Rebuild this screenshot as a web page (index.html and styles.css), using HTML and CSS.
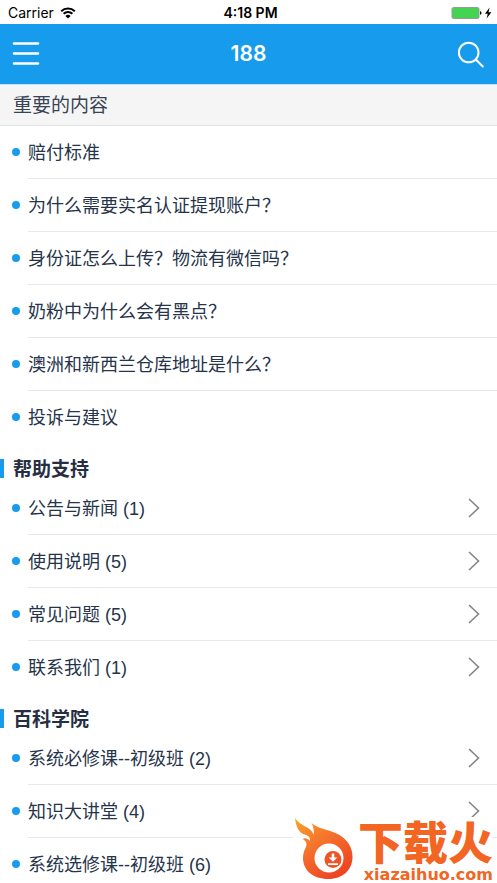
FILE: index.html
```
<!DOCTYPE html>
<html lang="zh-CN">
<head>
<meta charset="utf-8">
<meta name="viewport" content="width=device-width, initial-scale=1">
<title>188</title>
<link rel="stylesheet" href="styles.css">
</head>
<body>
<div class="screen">
  <div class="status">
    <div class="carrier">
      <span>Carrier</span>
      <svg class="wifi" viewBox="0 0 16 12" aria-hidden="true">
        <path d="M1.2 4.3a9.8 9.8 0 0 1 13.6 0M3.6 6.8a6.3 6.3 0 0 1 8.8 0" fill="none" stroke="#000" stroke-width="1.9"/>
        <path d="M8 11.6 5.4 8.9a3.8 3.8 0 0 1 5.2 0z"/>
      </svg>
    </div>
    <span class="time">4:18 PM</span>
    <svg class="battery" viewBox="0 0 42 14" aria-hidden="true">
      <rect x="1" y="1.5" width="27" height="11" rx="1.5" fill="#43d551" stroke="#999" />
      <path d="M29 5.2q1.6.3 1.6 1.8T29 8.8z"/>
      <path d="M38.6 1.5 34 7.8h2.8l-1.2 4.8 4.8-6.4h-2.9z"/>
    </svg>
  </div>
  <header class="navbar">
    <button class="icon-button" type="button" aria-label="菜单">
      <svg viewBox="0 0 28 28" aria-hidden="true"><path d="M2 3.5h24M2 13.5h24M2 23.5h24" stroke="#fff" stroke-width="2.6" stroke-linecap="round"/></svg>
    </button>
    <h1>188</h1>
    <button class="icon-button" type="button" aria-label="搜索">
      <svg viewBox="0 0 28 28" aria-hidden="true"><path d="M21.5 12.5a9.8 9.8 0 1 1-19.6 0 9.8 9.8 0 0 1 19.6 0zM18.8 19.5l7 7" fill="none" stroke="#fff" stroke-width="2" stroke-linecap="round"/></svg>
    </button>
  </header>
  <main>
    <h2 class="banner">重要的内容</h2>
    <ul class="list">
      <li><a href="#">赔付标准</a></li>
      <li><a href="#">为什么需要实名认证提现账户？</a></li>
      <li><a href="#">身份证怎么上传？物流有微信吗？</a></li>
      <li><a href="#">奶粉中为什么会有黑点？</a></li>
      <li><a href="#">澳洲和新西兰仓库地址是什么？</a></li>
      <li><a href="#">投诉与建议</a></li>
    </ul>
    <h2 class="section">帮助支持</h2>
    <ul class="list">
      <li><a href="#">公告与新闻 (1)<svg class="chevron" viewBox="0 0 12 20" aria-hidden="true"><path d="m1 1 9.5 9L1 19"/></svg></a></li>
      <li><a href="#">使用说明 (5)<svg class="chevron" viewBox="0 0 12 20" aria-hidden="true"><path d="m1 1 9.5 9L1 19"/></svg></a></li>
      <li><a href="#">常见问题 (5)<svg class="chevron" viewBox="0 0 12 20" aria-hidden="true"><path d="m1 1 9.5 9L1 19"/></svg></a></li>
      <li><a href="#">联系我们 (1)<svg class="chevron" viewBox="0 0 12 20" aria-hidden="true"><path d="m1 1 9.5 9L1 19"/></svg></a></li>
    </ul>
    <h2 class="section">百科学院</h2>
    <ul class="list">
      <li><a href="#">系统必修课--初级班 (2)<svg class="chevron" viewBox="0 0 12 20" aria-hidden="true"><path d="m1 1 9.5 9L1 19"/></svg></a></li>
      <li><a href="#">知识大讲堂 (4)<svg class="chevron" viewBox="0 0 12 20" aria-hidden="true"><path d="m1 1 9.5 9L1 19"/></svg></a></li>
      <li><a href="#">系统选修课--初级班 (6)<svg class="chevron" viewBox="0 0 12 20" aria-hidden="true"><path d="m1 1 9.5 9L1 19"/></svg></a></li>
    </ul>
  </main>
  <div class="watermark">
    <svg class="flame" viewBox="0 0 60 66" aria-hidden="true">
      <defs><linearGradient id="fire" x1="0" y1="0" x2=".65" y2="1"><stop offset="0" stop-color="#fba22d"/><stop offset=".5" stop-color="#f4702c"/><stop offset="1" stop-color="#ee4423"/></linearGradient></defs>
      <path fill="url(#fire)" d="M2 1C5 6 10 8 15 11c3 2 5 4 5.5 7 .8-4 .2-8-2-12 7 6 15 6 24 10 11 5 17 13 17 24 0 13-10 22-24 22-16 0-25.5-9-25.5-21 0-4 1-7 2.5-10 2-4 1-7-3-9 3-2 6 0 7.5 2 .5-3-1-5-4-6C5 16 3 9 2 1z"/>
      <circle cx="36" cy="41" r="14.5" fill="#fff"/>
      <circle cx="40" cy="42.5" r="8.5" fill="#ee5426"/>
      <path d="M38.7 36.500h2.600v4h3L40 44.800l-4.300-4.300h3zM35 46.300h10V48H35z" fill="#fff"/>
    </svg>
    <div class="wordmark">
      <span class="brand">下载火</span>
      <span class="domain">xiazaihuo.com</span>
    </div>
  </div>
</div>
</body>
</html>
```
FILE: styles.css
```
* { box-sizing: border-box; }

body {
  margin: 0;
  background: #fff;
  color: #26344a;
  font-family: "Liberation Sans", "Noto Sans CJK SC", sans-serif;
  font-size: 18px;
}

h1, h2, ul { margin: 0; padding: 0; }

.screen {
  position: relative;
  height: 100vh;
  overflow: hidden;
}

.status {
  display: grid;
  grid-template-columns: 1fr auto 1fr;
  align-items: center;
  height: 24px;
  padding: 2px 4px 0 8px;
  color: #000;
  font: 14px/20px Inter, sans-serif;
}

.carrier { display: flex; align-items: center; gap: 6px; }
.wifi { width: 16px; height: 12px; }
.time { font-weight: 600; }
.battery { width: 42px; height: 14px; justify-self: end; }

.navbar {
  display: flex;
  align-items: center;
  justify-content: space-between;
  height: 60px;
  padding: 0 12px;
  background: #169bed;
  color: #fff;
}

.navbar h1 { font: 600 21px/28px Inter, sans-serif; }

.icon-button {
  width: 28px;
  height: 28px;
  padding: 0;
  border: 0;
  background: none;
}

.icon-button svg { display: block; width: 28px; height: 28px; }

.banner {
  height: 42px;
  padding: 0 13px;
  border-top: 1px solid #c5dff0;
  border-bottom: 1px solid #dfe4e6;
  background: #f5f5f5;
  color: #3a4354;
  font-size: 19px;
  font-weight: 400;
  line-height: 42px;
}

.list { list-style: none; }

.list li {
  display: flex;
  align-items: center;
  gap: 8px;
  height: 53px;
  padding-left: 12px;
}

.list li::before {
  width: 8px;
  height: 8px;
  margin-bottom: 2px;
  border-radius: 50%;
  background: #169bed;
  content: "";
}

.list a {
  display: flex;
  flex: 1;
  align-items: center;
  justify-content: space-between;
  height: 53px;
  padding: 0 17px 2px 0;
  border-bottom: 1px solid #e2eaec;
  color: inherit;
  text-decoration: none;
}

.list li:last-child a { border-bottom-color: transparent; }

.chevron {
  width: 12px;
  height: 20px;
  margin-top: 2px;
  fill: none;
  stroke: #858585;
  stroke-width: 1.6;
}

.section {
  display: flex;
  align-items: flex-start;
  gap: 9px;
  height: 38px;
  padding-top: 10px;
  color: #252e42;
  font-size: 19px;
  font-weight: 700;
  line-height: 32px;
}

.section::before {
  width: 4px;
  height: 19px;
  margin-top: 5px;
  background: #169bed;
  content: "";
}

.watermark {
  position: absolute;
  right: 4px;
  bottom: 0;
  display: flex;
  gap: 5px;
  height: 66px;
  background: #fff;
  color: #f26522;
}

.flame { width: 60px; height: 66px; }

.wordmark {
  display: flex;
  flex-direction: column;
  align-items: flex-end;
  padding-top: 8px;
}

.brand {
  font: 900 45px/32px "Noto Sans CJK SC", sans-serif;
}

.domain {
  padding-top: 10px;
  font: 700 16px/16px "DejaVu Sans", sans-serif;
}
```
